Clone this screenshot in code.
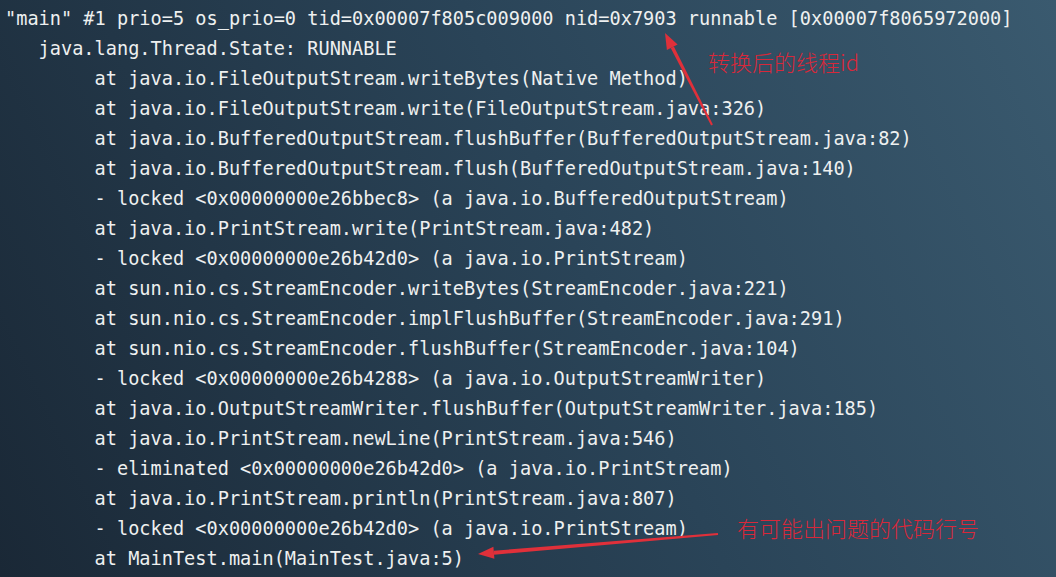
const lines: string[] = [
  '"main" #1 prio=5 os_prio=0 tid=0x00007f805c009000 nid=0x7903 runnable [0x00007f8065972000]',
  '   java.lang.Thread.State: RUNNABLE',
  '        at java.io.FileOutputStream.writeBytes(Native Method)',
  '        at java.io.FileOutputStream.write(FileOutputStream.java:326)',
  '        at java.io.BufferedOutputStream.flushBuffer(BufferedOutputStream.java:82)',
  '        at java.io.BufferedOutputStream.flush(BufferedOutputStream.java:140)',
  '        - locked <0x00000000e26bbec8> (a java.io.BufferedOutputStream)',
  '        at java.io.PrintStream.write(PrintStream.java:482)',
  '        - locked <0x00000000e26b42d0> (a java.io.PrintStream)',
  '        at sun.nio.cs.StreamEncoder.writeBytes(StreamEncoder.java:221)',
  '        at sun.nio.cs.StreamEncoder.implFlushBuffer(StreamEncoder.java:291)',
  '        at sun.nio.cs.StreamEncoder.flushBuffer(StreamEncoder.java:104)',
  '        - locked <0x00000000e26b4288> (a java.io.OutputStreamWriter)',
  '        at java.io.OutputStreamWriter.flushBuffer(OutputStreamWriter.java:185)',
  '        at java.io.PrintStream.newLine(PrintStream.java:546)',
  '        - eliminated <0x00000000e26b42d0> (a java.io.PrintStream)',
  '        at java.io.PrintStream.println(PrintStream.java:807)',
  '        - locked <0x00000000e26b42d0> (a java.io.PrintStream)',
  '        at MainTest.main(MainTest.java:5)',
];

// red annotation arrows drawn over the dump
function Arrows() {
  return (
    <svg className="absolute inset-0 pointer-events-none" width={1056} height={577} viewBox="0 0 1056 577">
      <g fill="#e0303a">
        <polygon points="712.9,124.5 711.1,125.5 670.7,48.1 673.9,46.5" />
        <polygon points="665,33 677.6,44.6 666.9,50.0" />
        <polygon points="718.1,535.0 717.9,533.0 493.7,550.7 494.1,554.7" />
        <polygon points="478,554 494.4,558.7 493.4,546.7" />
      </g>
    </svg>
  );
}

export default function App() {
  return (
    <div className="relative w-[1056px] h-[577px] overflow-hidden bg-[linear-gradient(65deg,#1a2836,#2a4458_55%,#3a5a6f)]">
      {/* Thread dump */}
      <div className="pl-[5px] pt-[4px] font-['DejaVu_Sans_Mono',monospace] text-[18.6px] text-[#eef0f0]">
        {lines.map((line, idx) => (
          <div key={idx} className="h-[30px] leading-[30px] whitespace-pre">
            {line}
          </div>
        ))}
      </div>

      {/* Annotations */}
      <div className="absolute left-[708px] top-[50px] font-['Noto_Sans_CJK_SC',sans-serif] text-[22px] leading-none font-light text-[#d8283a]">
        转换后的线程id
      </div>
      <div className="absolute left-[737px] top-[516px] font-['Noto_Sans_CJK_SC',sans-serif] text-[22px] leading-none font-light text-[#d8283a]">
        有可能出问题的代码行号
      </div>

      <Arrows />
    </div>
  );
}
